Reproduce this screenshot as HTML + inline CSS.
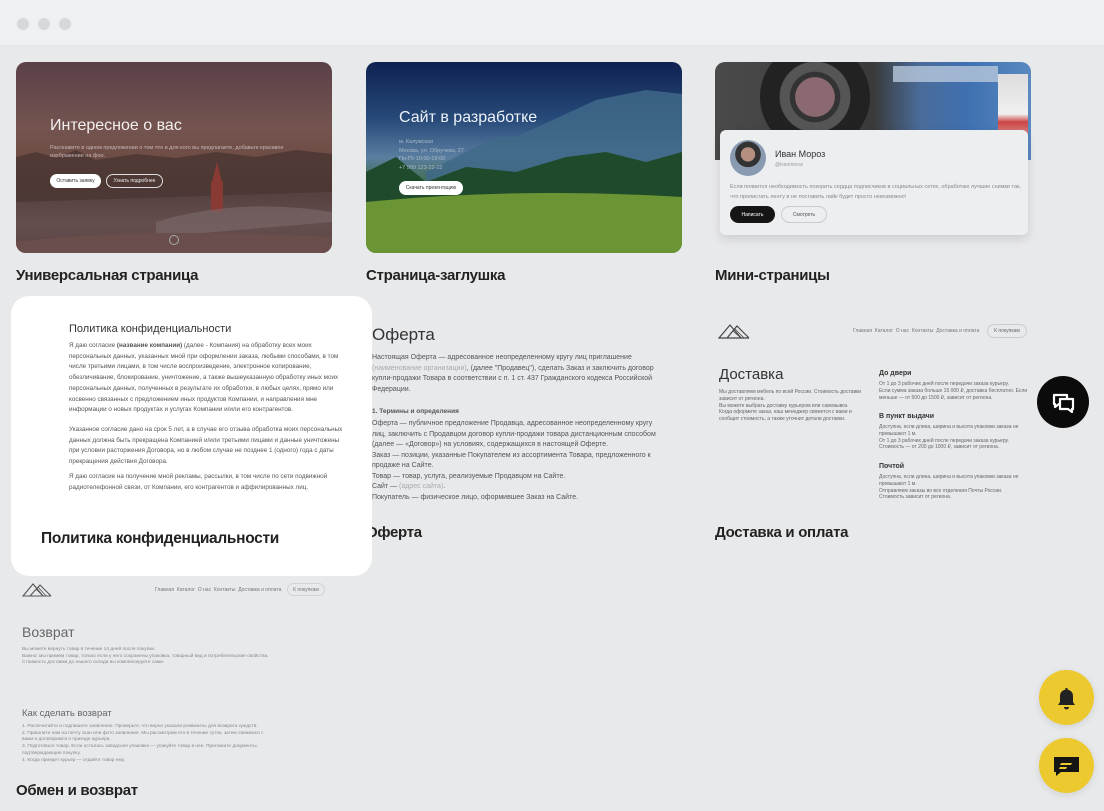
<!DOCTYPE html>
<html><head><meta charset="utf-8"><style>
*{margin:0;padding:0;box-sizing:border-box}
body{width:1104px;height:811px;overflow:hidden;background:#e8e9eb;font-family:"Liberation Sans",sans-serif;position:relative;color:#222}
.top{position:absolute;left:0;top:0;width:1104px;height:46px;background:#eef0f3;border-bottom:1px solid #e2e4e7}
.dot{position:absolute;top:18px;width:12px;height:12px;border-radius:50%;background:#d6d8dc}
.card{position:absolute;width:316px;height:191px;border-radius:10px;overflow:hidden}
.lbl{position:absolute;font-weight:bold;font-size:15px;color:#222;letter-spacing:-0.3px}
.abs{position:absolute}
.t{position:absolute;color:#666;font-size:6.5px;line-height:10px}
.btn{position:absolute;border-radius:10px;font-size:5px;display:flex;align-items:center;justify-content:center}
.nav{position:absolute;font-size:5px;color:#777}
</style></head><body>
<div class="top"><div class="dot" style="left:17px"></div><div class="dot" style="left:38px"></div><div class="dot" style="left:59px"></div></div>

<!-- card 1 -->
<div class="card" style="left:16px;top:62px;background:linear-gradient(180deg,#5a4048 0%,#74544f 35%,#6b4a40 55%,#4a3a38 70%,#7a6060 85%,#5a4444 100%)">
<svg class="abs" width="316" height="191" style="left:0;top:0">
<rect x="0" y="125" width="316" height="66" fill="#5d4646" opacity=".7"/>
<path d="M0 95 L20 90 L40 96 L60 88 L80 98 L120 92 L160 96 L200 90 L240 95 L280 88 L316 92 L316 130 L0 140Z" fill="#4a3632" opacity=".8"/>
<rect x="195" y="120" width="12" height="30" fill="#8a3a35"/><path d="M196 120 L201 100 L206 120Z" fill="#8a3a35"/>
<path d="M140 160 Q220 135 316 150 L316 160 L140 175Z" fill="#7b6a6a" opacity=".6"/>
<path d="M0 180 Q120 165 316 175 L316 191 L0 191Z" fill="#6a4e4c"/>
</svg>
<div class="abs" style="left:34px;top:55px;font-size:16px;color:#f3eeee">Интересное о вас</div>
<div class="abs" style="left:34px;top:82px;font-size:5.5px;line-height:8px;color:#c9b8b8;width:240px">Расскажите в одном предложении о том что и для кого вы предлагаете, добавьте красивое изображение на фон.</div>
<div class="btn" style="left:34px;top:112px;width:51px;height:14px;background:#fff;color:#333">Оставить заявку</div>
<div class="btn" style="left:90px;top:112px;width:57px;height:14px;border:1px solid #ddd;color:#eee">Узнать подробнее</div>
<div class="abs" style="left:153px;top:173px;width:10px;height:10px;border:1px solid #aaa;border-radius:50%"></div>
</div>
<div class="lbl" style="left:16px;top:267px">Универсальная страница</div>

<!-- card 2 -->
<div class="card" style="left:366px;top:62px;background:linear-gradient(180deg,#0e2250 0%,#274a7a 30%,#5a7ea0 50%,#3c6a40 65%,#5e8a30 85%,#7a9a40 100%)">
<svg class="abs" width="316" height="191" style="left:0;top:0">
<path d="M60 110 L130 75 L150 75 L230 38 L280 28 L316 32 L316 130 L60 130Z" fill="#3f6888" opacity=".85"/>
<path d="M0 110 L30 95 L60 120 L100 105 L150 110 L200 95 L240 90 L280 100 L316 90 L316 150 L0 150Z" fill="#1f4a2c"/>
<path d="M0 140 Q150 125 316 135 L316 191 L0 191Z" fill="#6b9535"/>
</svg>
<div class="abs" style="left:33px;top:47px;font-size:16px;color:#eef2f6">Сайт в разработке</div>
<div class="abs" style="left:33px;top:76px;font-size:5.5px;line-height:8.5px;color:#aab8c8">м. Калужская<br>Москва, ул. Обручева, 27<br>Пн-Пт 10:00-19:00<br>+7 999 123-22-22</div>
<div class="btn" style="left:33px;top:119px;width:64px;height:14px;background:#fff;color:#333">Скачать презентацию</div>
</div>
<div class="lbl" style="left:366px;top:267px">Страница-заглушка</div>

<!-- card 3 -->
<div class="card" style="left:715px;top:62px;height:180px;background:transparent;overflow:visible">
<div class="abs" style="left:0;top:0;width:316px;height:98px;border-radius:10px 10px 0 0;background:linear-gradient(90deg,#4a4a4a 0%,#3a3a3a 50%,#4a6c9a 65%,#3f70b0 80%,#5a8ac0 100%);overflow:hidden">
<div class="abs" style="left:45px;top:-20px;width:110px;height:110px;border-radius:50%;background:radial-gradient(circle,#8a6a70 0 25%,#333 26% 32%,#555 33% 45%,#222 46% 100%)"></div>
<div class="abs" style="left:283px;top:12px;width:30px;height:80px;background:linear-gradient(180deg,#ddd,#f0f0f0 50%,#c44 60%,#eee)"></div>
<div class="abs" style="left:178px;top:4px;width:105px;height:16px;background:#b8c8dc;opacity:.8"></div>
</div>
<div class="abs" style="left:5px;top:68px;width:308px;height:105px;background:#eceef0;border-radius:6px;box-shadow:0 4px 10px rgba(0,0,0,.12)">
<div class="abs" style="left:10px;top:10px;width:36px;height:36px;border-radius:50%;background:radial-gradient(circle at 50% 40%,#b59080 0 25%,#333 26% 45%,#8a9ab0 46%)"></div>
<div class="abs" style="left:55px;top:19px;font-size:9px;color:#333">Иван Мороз</div>
<div class="abs" style="left:55px;top:32px;font-size:5px;color:#999">@ivanmoroz</div>
<div class="abs" style="left:10px;top:53px;font-size:5.5px;line-height:9.5px;color:#888;width:295px">Если появится необходимость покорить сердца подписчиков в социальных сетях, обработаю лучшие снимки так, что пролистать ленту и не поставить лайк будет просто невозможно!</div>
<div class="btn" style="left:10px;top:76px;width:45px;height:17px;background:#151515;color:#fff;border-radius:9px">Написать</div>
<div class="btn" style="left:61px;top:76px;width:46px;height:17px;border:1px solid #ccc;color:#555;border-radius:9px">Смотреть</div>
</div>
</div>
<div class="lbl" style="left:715px;top:267px">Мини-страницы</div>

<!-- Оферта -->
<div class="abs" style="left:372px;top:325px;font-size:17px;color:#333">Оферта</div>
<div class="t" style="left:372px;top:353px;width:292px;font-size:7px;line-height:10.5px;color:#555">Настоящая Оферта — адресованное неопределенному кругу лиц приглашение <span style="color:#aaa">(наименование организации)</span>, (далее "Продавец"), сделать Заказ и заключить договор купли-продажи Товара в соответствии с п. 1 ст. 437 Гражданского кодекса Российской Федерации.</div>
<div class="t" style="left:372px;top:407px;color:#555;font-weight:bold;font-size:6.5px">1. Термины и определения</div>
<div class="t" style="left:372px;top:419px;width:292px;font-size:7px;line-height:10.5px;color:#555">Оферта — публичное предложение Продавца, адресованное неопределенному кругу лиц, заключить с Продавцом договор купли-продажи товара дистанционным способом (далее — «Договор») на условиях, содержащихся в настоящей Оферте.<br>Заказ — позиции, указанные Покупателем из ассортимента Товара, предложенного к продаже на Сайте.<br>Товар — товар, услуга, реализуемые Продавцом на Сайте.<br>Сайт — <span style="color:#aaa">(адрес сайта)</span>.<br>Покупатель — физическое лицо, оформившее Заказ на Сайте.</div>
<div class="lbl" style="left:366px;top:524px">Оферта</div>

<!-- Политика white card -->
<div class="abs" style="left:11px;top:296px;width:361px;height:280px;background:#fff;border-radius:18px">
<div class="abs" style="left:58px;top:27px;font-size:11px;color:#333">Политика конфиденциальности</div>
<div class="t" style="left:58px;top:45px;width:275px;font-size:6.3px;line-height:10.7px;color:#555">Я даю согласие <b>(название компании)</b> (далее - Компания) на обработку всех моих персональных данных, указанных мной при оформлении заказа, любыми способами, в том числе третьими лицами, в том числе воспроизведение, электронное копирование, обезличивание, блокирование, уничтожение, а также вышеуказанную обработку иных моих персональных данных, полученных в результате их обработки, в любых целях, прямо или косвенно связанных с предложением иных продуктов Компании, и направления мне информации о новых продуктах и услугах Компании и/или его контрагентов.</div>
<div class="t" style="left:58px;top:129px;width:275px;font-size:6.3px;line-height:10.7px;color:#555">Указанное согласие дано на срок 5 лет, а в случае его отзыва обработка моих персональных данных должна быть прекращена Компанией и/или третьими лицами и данные уничтожены при условии расторжения Договора, но в любом случае не позднее 1 (одного) года с даты прекращения действия Договора.</div>
<div class="t" style="left:58px;top:176px;width:262px;font-size:6.3px;line-height:10.7px;color:#555">Я даю согласие на получение мной рекламы, рассылки, в том числе по сети подвижной радиотелефонной связи, от Компании, его контрагентов и аффилированных лиц.</div>
<div class="lbl" style="left:30px;top:234px;font-size:15.5px">Политика конфиденциальности</div>
</div>

<!-- Доставка -->
<svg class="abs" style="left:718px;top:323px" width="32" height="16"><path d="M1 15 L12 2 L23 15 Z M9 15 L19 3 L31 15 M1 15 H31" fill="none" stroke="#444" stroke-width="1.2"/><path d="M15 8 L23 15 M17 6 L26 15" stroke="#444" stroke-width=".8"/></svg>
<div class="nav" style="left:853px;top:328px">Главная&nbsp; Каталог&nbsp; О нас&nbsp; Контакты&nbsp; Доставка и оплата</div>
<div class="btn" style="left:987px;top:324px;width:40px;height:14px;border:1px solid #ccc;color:#666">К покупкам</div>
<div class="abs" style="left:719px;top:366px;font-size:15px;color:#333">Доставка</div>
<div class="t" style="left:719px;top:389px;width:150px;font-size:5px;line-height:6.8px;color:#666">Мы доставляем мебель по всей России. Стоимость доставки зависит от региона.<br>Вы можете выбрать доставку курьером или самовывоз.<br>Когда оформите заказ, наш менеджер свяжется с вами и сообщит стоимость, а также уточнит детали доставки.</div>
<div class="abs" style="left:879px;top:370px;font-size:7px;color:#333;font-weight:bold">До двери</div>
<div class="t" style="left:879px;top:381px;width:150px;font-size:5px;line-height:6.8px">От 1 до 3 рабочих дней после передачи заказа курьеру.<br>Если сумма заказа больше 15 000 ₽, доставка бесплатно. Если меньше — от 500 до 1500 ₽, зависит от региона.</div>
<div class="abs" style="left:879px;top:413px;font-size:7px;color:#333;font-weight:bold">В пункт выдачи</div>
<div class="t" style="left:879px;top:424px;width:150px;font-size:5px;line-height:6.8px">Доступна, если длина, ширина и высота упаковки заказа не превышают 1 м.<br>От 1 до 3 рабочих дней после передачи заказа курьеру. Стоимость — от 200 до 1000 ₽, зависит от региона.</div>
<div class="abs" style="left:879px;top:463px;font-size:7px;color:#333;font-weight:bold">Почтой</div>
<div class="t" style="left:879px;top:474px;width:150px;font-size:5px;line-height:6.8px">Доступна, если длина, ширина и высота упаковки заказа не превышают 1 м.<br>Отправляем заказы во все отделения Почты России.<br>Стоимость зависит от региона.</div>
<div class="lbl" style="left:715px;top:524px">Доставка и оплата</div>

<!-- Возврат -->
<svg class="abs" style="left:22px;top:582px" width="30" height="15"><path d="M1 14 L11 2 L21 14 Z M8 14 L18 3 L29 14 M1 14 H29" fill="none" stroke="#555" stroke-width="1.1"/><path d="M14 7 L21 14 M16 5 L24 14" stroke="#555" stroke-width=".8"/></svg>
<div class="nav" style="left:155px;top:587px">Главная&nbsp; Каталог&nbsp; О нас&nbsp; Контакты&nbsp; Доставка и оплата</div>
<div class="btn" style="left:287px;top:583px;width:38px;height:13px;border:1px solid #d4d4d4;color:#777">К покупкам</div>
<div class="abs" style="left:22px;top:624px;font-size:14px;color:#666">Возврат</div>
<div class="t" style="left:22px;top:647px;width:260px;font-size:4.8px;line-height:6.7px;color:#888">Вы можете вернуть товар в течение 14 дней после покупки.<br>Важно: мы примем товар, только если у него сохранены упаковка, товарный вид и потребительские свойства.<br>Стоимость доставки до нашего склада вы компенсируете сами.</div>
<div class="abs" style="left:22px;top:708px;font-size:9.5px;color:#666">Как сделать возврат</div>
<div class="t" style="left:22px;top:724px;width:250px;font-size:4.8px;line-height:6.7px;color:#888">1. Распечатайте и подпишите заявление. Проверьте, что верно указали реквизиты для возврата средств.<br>2. Пришлите нам на почту скан или фото заявления. Мы рассмотрим его в течение суток, затем свяжемся с вами и договоримся о приезде курьера.<br>3. Подготовьте товар. Если осталась заводская упаковка — упакуйте товар в нее. Приложите документы, подтверждающие покупку.<br>4. Когда приедет курьер — отдайте товар ему.</div>
<div class="lbl" style="left:16px;top:782px">Обмен и возврат</div>

<!-- floating buttons -->
<div class="abs" style="left:1037px;top:376px;width:52px;height:52px;border-radius:50%;background:#0b0b0b">
<svg width="52" height="52"><path d="M17 19 H30 V28 H22 L18 31 V28 H17 Z" fill="none" stroke="#fff" stroke-width="2.2" stroke-linejoin="round"/><path d="M23 23 H36 V33 H35 V36 L31 33 H23 Z" fill="#0b0b0b" stroke="#fff" stroke-width="2.2" stroke-linejoin="round"/></svg>
</div>
<div class="abs" style="left:1039px;top:670px;width:55px;height:55px;border-radius:50%;background:#ecc92e;box-shadow:0 2px 8px rgba(0,0,0,.1)">
<svg width="55" height="55"><path d="M19 35 H36 L34 32 V26 A6.5 6.5 0 0 0 21 26 V32 Z" fill="#222"/><rect x="26.5" y="18" width="2" height="3" fill="#222"/><path d="M25 37 H30 A2.5 2.5 0 0 1 25 37Z" fill="#222"/></svg>
</div>
<div class="abs" style="left:1039px;top:738px;width:55px;height:55px;border-radius:50%;background:#ecc92e;box-shadow:0 2px 8px rgba(0,0,0,.1)">
<svg width="55" height="55"><path d="M15 19 H40 V34 H22 L17 38 V34 H15 Z" fill="#151515"/><path d="M22 25 H33 L32 27 H21 Z M21 29 H28 L27 31 H20 Z" fill="#ecc92e"/></svg>
</div>
</body></html>
